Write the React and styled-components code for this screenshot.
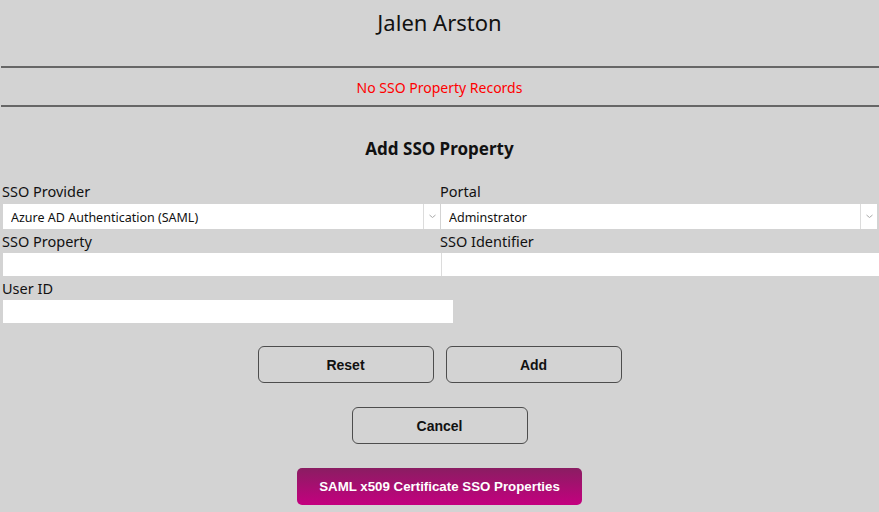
import React from "react";
import styled, { createGlobalStyle } from "styled-components";

const GlobalStyle = createGlobalStyle`
  body {
    margin: 0;
    background: #d3d3d3;
    overflow: hidden;
    font-family: "Noto Sans", "DejaVu Sans", sans-serif;
  }
`;

const Page = styled.div`
  width: 879px;
  min-height: 512px;
  background: #d3d3d3;
  color: #111;
`;

const Title = styled.h1`
  margin: 0;
  padding: 7px 0 29px;
  font-size: 22px;
  font-weight: 400;
  line-height: 30px;
  text-align: center;
`;

const Divider = styled.div`
  height: 2px;
  margin-left: 1px;
  background: #666;
`;

const Notice = styled.div`
  padding: 10px 0 8px;
  font-size: 14px;
  line-height: 19px;
  color: #ff0000;
  text-align: center;
`;

const SectionTitle = styled.h2`
  margin: 30px 0 21px;
  font-size: 17px;
  font-weight: 700;
  line-height: 23px;
  text-align: center;
`;

const Form = styled.div`
  display: grid;
  grid-template-columns: 438px 1fr;
  padding-left: 3px;
  row-gap: 2px;
`;

const Field = styled.div`
  display: flex;
  flex-direction: column;
  grid-column: ${(p) => (p.full ? "1 / span 2" : "auto")};
`;

const Label = styled.label`
  font-size: 14.5px;
  line-height: 20px;
  margin: 0 0 2px -1px;
`;

const SelectBox = styled.div`
  display: flex;
  width: ${(p) => p.width}px;
  height: 25px;
  margin-top: 1px;
  background: #fff;
`;

const Select = styled.select`
  flex: 1;
  appearance: none;
  border: none;
  outline: none;
  background: transparent;
  padding: 2px 0 0 8px;
  font-family: "Noto Sans", "DejaVu Sans", sans-serif;
  font-size: 12.5px;
  color: #111;
`;

const Arrow = styled.div`
  width: 16px;
  border-left: 1px solid #dcdcdc;
  display: flex;
  align-items: center;
  justify-content: center;
`;

const Input = styled.input`
  box-sizing: border-box;
  width: ${(p) => p.width || "100%"};
  height: 23px;
  border: none;
  border-left: ${(p) => (p.divided ? "1px solid #dcdcdc" : "none")};
  outline: none;
  background: #fff;
  padding: 0 6px;
  font-family: inherit;
`;

const Actions = styled.div`
  display: flex;
  flex-direction: column;
  align-items: center;
  gap: 24px;
  margin-top: 23px;
`;

const ButtonRow = styled.div`
  display: flex;
  gap: 12px;
`;

const Button = styled.button`
  box-sizing: border-box;
  width: 176px;
  height: 37px;
  border: 1px solid #4d4d4d;
  border-radius: 6px;
  background: transparent;
  font-family: "Liberation Sans", Arial, sans-serif;
  font-size: 14px;
  font-weight: 700;
  color: #111;
`;

const PrimaryButton = styled(Button)`
  width: 285px;
  border: none;
  border-radius: 5px;
  background: linear-gradient(to bottom, #8a1d62, #c4007f);
  font-size: 13.3px;
  color: #fff;
`;

const Chevron = () => (
  <svg width="7" height="5" viewBox="0 0 7 5">
    <path d="M0.5 1l3 2.5 3-2.5" fill="none" stroke="#a8a8a8" strokeWidth="1" />
  </svg>
);

const Dropdown = ({ width, value }) => (
  <SelectBox width={width}>
    <Select defaultValue={value}>
      <option>{value}</option>
    </Select>
    <Arrow>
      <Chevron />
    </Arrow>
  </SelectBox>
);

export default function App() {
  return (
    <Page>
      <GlobalStyle />
      <Title>Jalen Arston</Title>
      <Divider />
      <Notice>No SSO Property Records</Notice>
      <Divider />
      <SectionTitle>Add SSO Property</SectionTitle>
      <Form>
        <Field>
          <Label>SSO Provider</Label>
          <Dropdown width={437} value="Azure AD Authentication (SAML)" />
        </Field>
        <Field>
          <Label>Portal</Label>
          <Dropdown width={436} value="Adminstrator" />
        </Field>
        <Field>
          <Label>SSO Property</Label>
          <Input />
        </Field>
        <Field>
          <Label>SSO Identifier</Label>
          <Input divided />
        </Field>
        <Field full>
          <Label>User ID</Label>
          <Input width="450px" />
        </Field>
      </Form>
      <Actions>
        <ButtonRow>
          <Button>Reset</Button>
          <Button>Add</Button>
        </ButtonRow>
        <Button>Cancel</Button>
        <PrimaryButton>SAML x509 Certificate SSO Properties</PrimaryButton>
      </Actions>
    </Page>
  );
}
